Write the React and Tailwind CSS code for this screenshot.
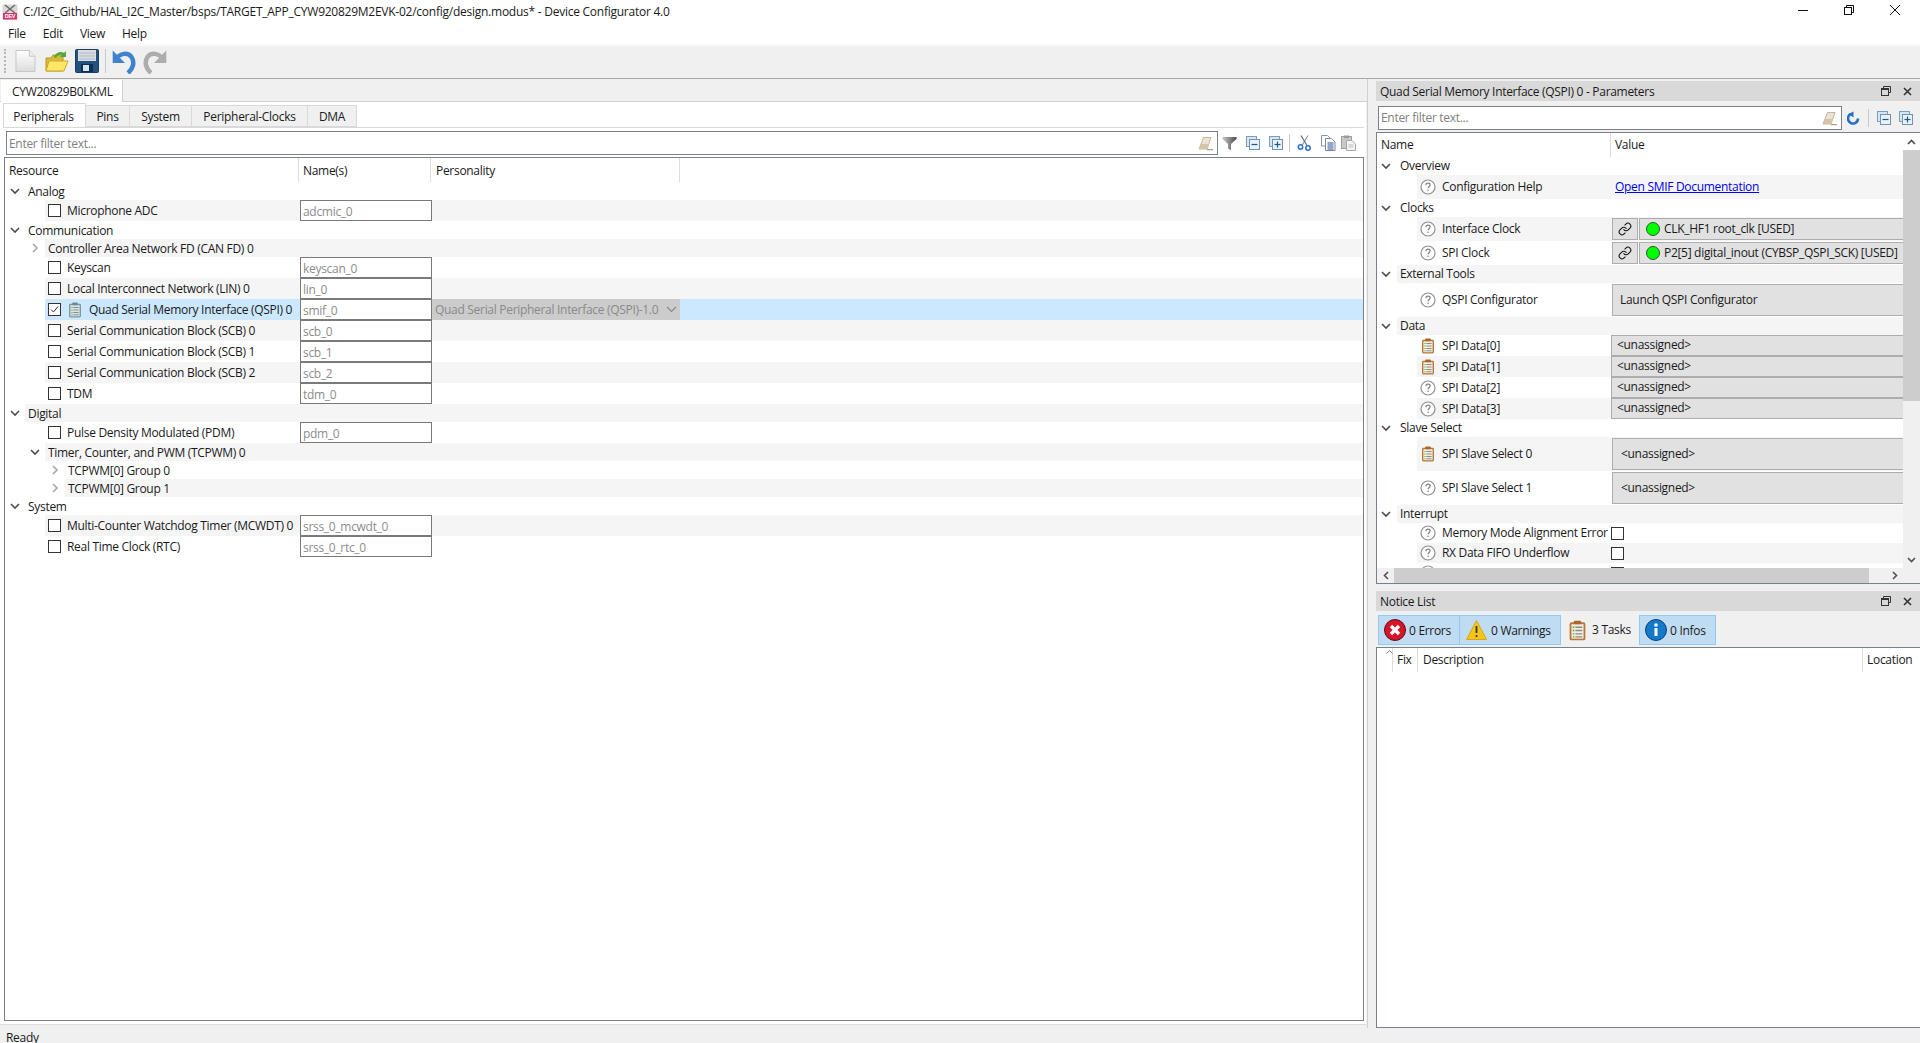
import React from 'react';
import { Link as LinkIcon } from 'lucide-react';

const Chevron = ({ open, className = '' }) => (
  <svg width="10" height="10" viewBox="0 0 10 10" className={className}>
    {open
      ? <path d="M1 3 L5 7 L9 3" fill="none" stroke="#4d4d4d" strokeWidth="1.6" />
      : <path d="M3 1 L7 5 L3 9" fill="none" stroke="#a6a6a6" strokeWidth="1.6" />}
  </svg>
);
const Check = ({ on, className = '' }) => (
  <div className={`w-[13px] h-[13px] border border-[#333333] bg-white shrink-0 flex items-center justify-center ${className}`}>
    {on && <svg width="9" height="9" viewBox="0 0 9 9"><path d="M1 4.5 L3.5 7 L8 1.5" fill="none" stroke="#333" strokeWidth="1" /></svg>}
  </div>
);
const Help = () => (
  <svg width="16" height="16" viewBox="0 0 16 16" className="shrink-0">
    <circle cx="8" cy="8" r="7" fill="#fff" stroke="#8f8f8f" strokeWidth="1.2" />
    <path d="M5.9 6.2 C5.9 4.9 6.9 4.2 8 4.2 C9.2 4.2 10.1 5 10.1 6 C10.1 7.4 8.1 7.5 8.1 9.2" fill="none" stroke="#808080" strokeWidth="1.2" />
    <circle cx="8.1" cy="11.3" r=".8" fill="#808080" />
  </svg>
);
const Task = ({ gray, size = 16 }) => (
  <svg width={size} height={size} viewBox="0 0 16 16" className="shrink-0">
    <rect x="2" y="1.8" width="12" height="13.6" rx="1.4" fill={gray ? '#7f97a3' : '#b9773f'} />
    <rect x="3.4" y="3.2" width="9.2" height="11" fill={gray ? '#d8e6e8' : '#f4eedf'} />
    <rect x="5.2" y=".6" width="5.6" height="2.6" rx=".8" fill={gray ? '#6f8894' : '#a8672f'} />
    <path d="M4.4 5.5h1.2M4.4 8h1.2M4.4 10.5h1.2M4.4 12.8h1.2" stroke="#5aa83a" strokeWidth="1" />
    <path d="M6.4 5.5h5.2M6.4 8h5.2M6.4 10.5h5.2M6.4 12.8h5.2" stroke="#8a8a8a" strokeWidth="1" />
  </svg>
);
const Eraser = () => (
  <svg width="16" height="16" viewBox="0 0 16 16" className="shrink-0">
    <path d="M1 14 L5.5 2.5 H13 L9 14 Z" fill="#ede3d4" stroke="#b8a68c" strokeWidth=".8" />
    <path d="M1 14 L3 9 H10.8 L9 14 Z" fill="#d6c3a8" />
    <path d="M9 14.7 H15" stroke="#9b8a70" strokeWidth="1" />
  </svg>
);
const Funnel = () => (
  <svg width="15" height="15" viewBox="0 0 15 15" className="shrink-0">
    <defs><linearGradient id="fg" x1="0" x2="1"><stop offset="0" stopColor="#c9c9c9" /><stop offset="1" stopColor="#4a4a4a" /></linearGradient></defs>
    <path d="M.5 1 H14.5 V3 L9 8 V14.5 L6 12.5 V8 L.5 3 Z" fill="url(#fg)" />
  </svg>
);
const Box = ({ plus }) => (
  <svg width="14" height="14" viewBox="0 0 14 14" className="shrink-0">
    <rect x=".5" y=".5" width="10" height="10" fill="#d8e6f2" stroke="#7f9db9" />
    <rect x="3.5" y="3.5" width="10" height="10" fill="#eaf2f9" stroke="#6f93b5" />
    <path d="M5.5 8.5 H11.5" stroke="#1c5a8c" strokeWidth="1.2" />
    {plus && <path d="M8.5 5.5 V11.5" stroke="#1c5a8c" strokeWidth="1.2" />}
  </svg>
);
const Scissors = () => (
  <svg width="14" height="16" viewBox="0 0 14 16" className="shrink-0">
    <path d="M11 .5 L5 10.5" stroke="#8b9bb0" strokeWidth="1.2" fill="none" />
    <path d="M4 .5 L10 10.5" stroke="#5d6f88" strokeWidth="1.2" fill="none" />
    <circle cx="3.5" cy="12" r="2.2" fill="none" stroke="#2f6fd0" strokeWidth="1.5" />
    <circle cx="11" cy="13" r="2.2" fill="none" stroke="#2f6fd0" strokeWidth="1.5" />
  </svg>
);
const CopyI = () => (
  <svg width="15" height="16" viewBox="0 0 15 16" className="shrink-0">
    <path d="M.5 .5 H6.5 L9 3 V11 H.5 Z" fill="#fff" stroke="#8a96a3" />
    <path d="M4.5 3.5 H10.5 L14 7 V15.5 H4.5 Z" fill="#fff" stroke="#7a8794" />
    <path d="M6.5 8h6M6.5 10h6M6.5 12h6M6.5 14h6" stroke="#1f4fa3" strokeWidth="1" />
  </svg>
);
const PasteI = () => (
  <svg width="15" height="16" viewBox="0 0 15 16" className="shrink-0">
    <rect x=".5" y="1.5" width="10" height="12" fill="#c9c9c9" stroke="#a0a0a0" />
    <rect x="3" y=".5" width="5" height="2.6" fill="#9a9a9a" />
    <path d="M5.5 5.5 H11 L14.5 9 V15.5 H5.5 Z" fill="#f5f5f5" stroke="#a8a8a8" />
    <path d="M7.5 10h5M7.5 12h5" stroke="#bdbdbd" strokeWidth="1" />
  </svg>
);
const RestoreI = () => (
  <svg width="10" height="10" viewBox="0 0 10 10" className="shrink-0">
    <path d="M2.5 2.5 V.5 H9.5 V6.5 H7.5" fill="none" stroke="#333" />
    <rect x=".5" y="2.5" width="7" height="7" fill="none" stroke="#333" />
    <path d="M.5 3.5 H7.5" stroke="#333" />
  </svg>
);
const CloseI = () => (
  <svg width="9" height="9" viewBox="0 0 9 9" className="shrink-0">
    <path d="M1 1 L8 8 M8 1 L1 8" stroke="#333" strokeWidth="1.6" />
  </svg>
);
const Refresh = () => (
  <svg width="13" height="14" viewBox="0 0 13 14" className="shrink-0">
    <path d="M3.4 3.2 A5 5 0 1 0 11 7.5" fill="none" stroke="#2272c3" strokeWidth="2.6" />
    <path d="M6.5 .4 V6.4 L1.4 3 Z" fill="#2272c3" />
  </svg>
);

const Field = ({ children }) => (
  <div className="w-[132px] h-[21px] border-[1.5px] border-[#7a7a7a] bg-white text-[#8c8c8c] pl-[2px] leading-[21px] shrink-0 overflow-hidden">{children}</div>
);

const tree = [
  { t: 'Analog', lvl: 0, open: true },
  { t: 'Microphone ADC', lvl: 1, chk: true, name: 'adcmic_0', alt: true },
  { t: 'Communication', lvl: 0, open: true },
  { t: 'Controller Area Network FD (CAN FD) 0', lvl: 1, open: false, alt: true },
  { t: 'Keyscan', lvl: 1, chk: true, name: 'keyscan_0' },
  { t: 'Local Interconnect Network (LIN) 0', lvl: 1, chk: true, name: 'lin_0', alt: true },
  { t: 'Quad Serial Memory Interface (QSPI) 0', lvl: 1, chk: true, on: true, name: 'smif_0', sel: true },
  { t: 'Serial Communication Block (SCB) 0', lvl: 1, chk: true, name: 'scb_0', alt: true },
  { t: 'Serial Communication Block (SCB) 1', lvl: 1, chk: true, name: 'scb_1' },
  { t: 'Serial Communication Block (SCB) 2', lvl: 1, chk: true, name: 'scb_2', alt: true },
  { t: 'TDM', lvl: 1, chk: true, name: 'tdm_0' },
  { t: 'Digital', lvl: 0, open: true, alt: true },
  { t: 'Pulse Density Modulated (PDM)', lvl: 1, chk: true, name: 'pdm_0' },
  { t: 'Timer, Counter, and PWM (TCPWM) 0', lvl: 1, open: true, alt: true },
  { t: 'TCPWM[0] Group 0', lvl: 2, open: false },
  { t: 'TCPWM[0] Group 1', lvl: 2, open: false, alt: true },
  { t: 'System', lvl: 0, open: true },
  { t: 'Multi-Counter Watchdog Timer (MCWDT) 0', lvl: 1, chk: true, name: 'srss_0_mcwdt_0', alt: true },
  { t: 'Real Time Clock (RTC)', lvl: 1, chk: true, name: 'srss_0_rtc_0' },
];

const TreeRow = ({ r }) => {
  const bg = r.sel ? 'bg-[#cce8ff]' : r.alt ? 'bg-[#f5f5f5]' : 'bg-white';
  const indent = r.lvl === 0 ? 'pl-[5px]' : r.lvl === 1 ? (r.chk ? 'pl-[43px]' : 'pl-[25px]') : 'pl-[45px]';
  const bandStart = r.lvl === 0 ? 'ml-[20px]' : r.lvl === 1 ? 'ml-[40px]' : 'ml-[60px]';
  return (
    <div className={`relative flex items-center ${r.name ? 'h-[21px]' : 'h-[18px]'} w-full`}>
      <div className={`absolute inset-y-0 right-0 left-0 ${bandStart} ${bg}`} />
      <div className={`relative flex items-center w-[295px] shrink-0 ${indent}`}>
        {r.open !== undefined && <Chevron open={r.open} className="shrink-0 mr-[8px]" />}
        {r.chk && <Check on={r.on} className="mr-[6px]" />}
        {r.sel && <span className="mr-[6px]"><Task gray /></span>}
        <span className={`whitespace-nowrap ${r.name ? '' : 'pt-[2px]'}`}>{r.t}</span>
      </div>
      {r.name && <div className="relative"><Field>{r.name}</Field></div>}
      {r.sel && (
        <div className="relative w-[248px] h-[21px] bg-[#cccccc] text-[#8a8a8a] flex items-center justify-between pl-[3px] pr-[3px]">
          <span className="whitespace-nowrap">Quad Serial Peripheral Interface (QSPI)-1.0</span>
          <svg width="11" height="7" viewBox="0 0 11 7"><path d="M1 1 L5.5 5.5 L10 1" fill="none" stroke="#8a8a8a" strokeWidth="1.2" /></svg>
        </div>
      )}
    </div>
  );
};

const Group = ({ t, alt }) => (
  <div className="relative flex items-center h-[18px] pl-[4px]">
    <div className={`absolute inset-y-0 left-[20px] right-0 ${alt ? 'bg-[#f5f5f5]' : 'bg-white'}`} />
    <Chevron open className="relative shrink-0 mr-[9px]" />
    <span className="relative">{t}</span>
  </div>
);
const PRow = ({ icon, t, h, alt, children }) => (
  <div className={`relative flex items-center ${h}`}>
    <div className={`absolute inset-y-0 left-[40px] right-0 ${alt ? 'bg-[#f5f5f5]' : 'bg-white'}`} />
    <div className="relative flex items-center w-[235px] shrink-0 pl-[43px] gap-[6px]">
      {icon === 'task' ? <Task /> : <Help />}
      <span className="whitespace-nowrap">{t}</span>
    </div>
    <div className="relative flex-1 min-w-0 h-full">{children}</div>
  </div>
);
const Gray = ({ children, cls }) => (
  <div className={`bg-[#e1e1e1] border-[#adadad] flex items-center whitespace-nowrap overflow-hidden ${cls}`}>{children}</div>
);
const Assign = () => (
  <Gray cls="h-full border-l-[1.5px] border-t-[1.5px] border-b-[1.5px] -ml-[1px] pl-[5px] pb-[2px]">&lt;unassigned&gt;</Gray>
);
const Led = () => <div className="w-[14px] h-[14px] rounded-full bg-[#00ff00] border border-[#2a5a2a] shrink-0" />;

const Clock = ({ text }) => (
  <div className="flex h-full py-[1px] gap-[1px]">
    <div className="w-[26px] bg-[#e1e1e1] border border-[#adadad] flex items-center justify-center shrink-0">
      <LinkIcon size={14} strokeWidth={1.8} color="#111111" />
    </div>
    <Gray cls="flex-1 min-w-0 border border-r-0 pl-[6px] gap-[4px]"><Led /><span>{text}</span></Gray>
  </div>
);

const Panel = ({ title }) => (
  <div className="h-[20px] bg-[#d9d9d9] flex items-center pl-[4px] pr-[8px] shrink-0">
    <span className="flex-1 pt-[1px]">{title}</span>
    <RestoreI />
    <span className="w-[12px]" />
    <CloseI />
  </div>
);

const Sep = ({ h = 'h-[18px]' }) => <div className={`w-px ${h} bg-[#c9c9c9] shrink-0`} />;

export default function App() {
  return (
    <div className="w-[1920px] h-[1043px] overflow-hidden flex flex-col bg-[#f0f0f0] text-[12px] text-[#1a1a1a] font-['Open_Sans','Noto_Sans',sans-serif] tracking-[-0.3px]">
      {/* title bar */}
      <div className="h-[23px] bg-white flex items-center shrink-0 relative">
        <svg width="16" height="16" viewBox="0 0 16 16" className="ml-[2px] mr-[5px] shrink-0">
          <rect x=".5" y=".5" width="15" height="15" fill="#d9d9d9" />
          <path d="M3 1 L13 9 M13 1 L3 9" stroke="#6b6b6b" strokeWidth="1.6" />
          <rect x="1" y="9" width="14" height="6.5" fill="#d6336c" />
          <text x="8" y="14.4" textAnchor="middle" fontSize="5.5" fill="#fff" fontFamily="Liberation Sans, sans-serif" fontWeight="700">DEV</text>
        </svg>
        <span className="whitespace-nowrap tracking-[-0.25px]">C:/I2C_Github/HAL_I2C_Master/bsps/TARGET_APP_CYW920829M2EVK-02/config/design.modus* - Device Configurator 4.0</span>
        <div className="ml-auto flex items-center h-full pb-[4px]">
          <svg width="10" height="10" viewBox="0 0 10 10" className="mr-[36px]"><path d="M0 5.5 H10" stroke="#111" /></svg>
          <svg width="10" height="10" viewBox="0 0 10 10" className="mr-[36px]"><path d="M2.5 2.5 V.5 H9.5 V7.5 H7.5" fill="none" stroke="#111" /><rect x=".5" y="2.5" width="7" height="7" fill="none" stroke="#111" /></svg>
          <svg width="10" height="10" viewBox="0 0 10 10" className="mr-[20px]"><path d="M0 0 L10 10 M10 0 L0 10" stroke="#111" /></svg>
        </div>
      </div>
      {/* menu */}
      <div className="h-[21px] bg-white flex items-center pl-[8px] gap-[17px] shrink-0">
        <span>File</span><span>Edit</span><span>View</span><span>Help</span>
      </div>
      <div className="h-[2px] bg-[#f8f8f8] shrink-0" />
      {/* toolbar */}
      <div className="h-[33px] bg-[#f0f0f0] border-b border-[#a8a8a8] flex items-center shrink-0 pl-[4px] pb-[2px]">
        <div className="w-[3px] h-[24px] mr-[8px] border-l-2 border-dotted border-[#b5b5b5]" />
        <svg width="21" height="24" viewBox="0 0 22 24" className="mr-[9px]">
          <defs><linearGradient id="nd" x1="0" y1="0" x2="0" y2="1"><stop offset="0" stopColor="#ffffff" /><stop offset="1" stopColor="#dcdcdc" /></linearGradient></defs>
          <path d="M1 1 H15 L21 7 V23 H1 Z" fill="url(#nd)" stroke="#c4c4c4" />
          <path d="M15 1 V7 H21" fill="#eeeeee" stroke="#c4c4c4" />
        </svg>
        <svg width="24" height="22" viewBox="0 0 24 22" className="mr-[6px]">
          <path d="M1 8 H6 L8 5 H18 V21 H1 Z" fill="#d9b93a" stroke="#b89a25" />
          <path d="M4 11 H23 L19 21 H1 Z" fill="#ffe667" stroke="#c9aa2c" />
          <path d="M9 7 C11 2 16 1 19 3 L21 1 V7 H15 L17 5 C15 4 12 5 11 8 Z" fill="#4fa83a" />
        </svg>
        <svg width="24" height="24" viewBox="0 0 24 24" className="mr-[6px]">
          <rect x=".5" y=".5" width="23" height="23" rx="1" fill="#24527f" stroke="#1a3d60" />
          <rect x="3" y="1" width="18" height="11" fill="#dcdcdc" />
          <path d="M4 4 H20 M4 7 H20 M4 10 H20" stroke="#a8bcd0" strokeWidth="1" />
          <rect x="6" y="15" width="12" height="8" fill="#0f2f52" />
          <rect x="8" y="16" width="6" height="6" fill="#d9e6f2" />
        </svg>
        <Sep h="h-[24px]" />
        <svg width="24" height="25" viewBox="0 0 24 25" className="ml-[6px] mr-[7px]">
          <path d="M4 10 C8 4 16 3 19.5 8 C23 13 21 20 16 24" fill="none" stroke="#3f83cf" strokeWidth="4.5" />
          <path d="M.7 1.5 V14 H13 Z" fill="#3f83cf" />
        </svg>
        <svg width="24" height="25" viewBox="0 0 24 25">
          <path d="M20 10 C16 4 8 3 4.5 8 C1 13 3 20 8 24" fill="none" stroke="#adadad" strokeWidth="4.5" />
          <path d="M23.3 1.5 V14 H11 Z" fill="#adadad" />
        </svg>
      </div>
      {/* main */}
      <div className="flex-1 min-h-0 flex">
        {/* left */}
        <div className="w-[1368px] shrink-0 flex flex-col border-r border-[#d0d0d0]">
          <div className="h-[23px] flex items-start shrink-0 border-b border-[#cfcfcf] pt-[1px] pl-[1px]">
            <div className="w-[122px] h-[23px] bg-white border-r border-[#cfcfcf] flex items-center pl-[11px]">CYW20829B0LKML</div>
          </div>
          <div className="flex-1 min-h-0 bg-white flex flex-col pl-[3px] pr-[2px] mr-[1px] mb-[3px] border-b border-[#dcdcdc]">
            <div className="h-[26px] flex items-end shrink-0 border-b border-[#d9d9d9]">
              <div className="w-[83px] h-[24px] bg-white border border-b-0 border-[#d9d9d9] flex items-center justify-center pr-[2px] pt-[2px]">Peripherals</div>
              <div className="w-[44px] h-[22px] bg-[#f0f0f0] border border-l-0 border-[#d9d9d9] flex items-center justify-center pt-[2px]">Pins</div>
              <div className="w-[62px] h-[22px] bg-[#f0f0f0] border border-l-0 border-[#d9d9d9] flex items-center justify-center pt-[2px]">System</div>
              <div className="w-[116px] h-[22px] bg-[#f0f0f0] border border-l-0 border-[#d9d9d9] flex items-center justify-center pt-[2px]">Peripheral-Clocks</div>
              <div className="w-[49px] h-[22px] bg-[#f0f0f0] border border-l-0 border-[#d9d9d9] flex items-center justify-center pt-[2px]">DMA</div>
            </div>
            <div className="h-[24px] mt-[3px] flex items-center shrink-0">
              <div className="w-[1212px] ml-[3px] h-full border border-[#7a8088] bg-white flex items-center pl-[2px] pr-[3px] text-[#808080]">
                <span className="flex-1 pt-[1px]">Enter filter text...</span><Eraser />
              </div>
              <div className="flex items-center ml-[4px]">
                <Funnel />
                <span className="w-[9px]" /><Box />
                <span className="w-[9px]" /><Box plus />
                <span className="w-[6px]" /><Sep />
                <span className="w-[7px]" /><Scissors />
                <span className="w-[10px]" /><CopyI />
                <span className="w-[5px]" /><PasteI />
              </div>
            </div>
            <div className="flex-1 min-h-0 mt-[2px] mb-[3px] ml-[1px] border border-[#7a8088] bg-white overflow-hidden">
              <div className="h-[24px] flex items-center">
                <div className="w-[294px] pl-[4px] pt-[2px] h-full flex items-center border-r border-[#dcdcdc]">Resource</div>
                <div className="w-[132px] pl-[4px] pt-[2px] h-full flex items-center border-r border-[#dcdcdc]">Name(s)</div>
                <div className="w-[249px] pl-[5px] pt-[2px] h-full flex items-center border-r border-[#dcdcdc]">Personality</div>
              </div>
              {tree.map((r) => <TreeRow key={r.t} r={r} />)}
            </div>
          </div>
        </div>
        {/* right */}
        <div className="flex-1 min-w-0 flex flex-col pl-[8px]">
          <div className="h-[2px] shrink-0" />
          <Panel title="Quad Serial Memory Interface (QSPI) 0 - Parameters" />
          <div className="h-[24px] mt-[5px] flex items-center shrink-0 pl-[2px]">
            <div className="w-[464px] h-full border border-[#7a8088] bg-white flex items-center pl-[2px] pr-[3px] text-[#808080]">
              <span className="flex-1">Enter filter text...</span><Eraser />
            </div>
            <div className="flex items-center gap-[8px] ml-[5px]"><Refresh /><Sep /><Box /><Box plus /></div>
          </div>
          <div className="h-[452px] mt-[2px] border border-r-0 border-[#7a8088] bg-white flex flex-col shrink-0 overflow-hidden">
            <div className="flex-1 min-h-0 flex">
              <div className="flex-1 min-w-0 overflow-hidden">
                <div className="h-[24px] flex items-center">
                  <div className="w-[234px] pl-[4px] h-full flex items-center border-r border-[#dcdcdc]">Name</div>
                  <div className="pl-[4px]">Value</div>
                </div>
                <Group t="Overview" />
                <PRow t="Configuration Help" h="h-[24px]" alt>
                  <div className="h-full flex items-center pl-[3px] text-[#0000ee] underline">Open SMIF Documentation</div>
                </PRow>
                <Group t="Clocks" />
                <PRow t="Interface Clock" h="h-[24px]" alt><Clock text="CLK_HF1 root_clk [USED]" /></PRow>
                <PRow t="SPI Clock" h="h-[24px]"><Clock text="P2[5] digital_inout (CYBSP_QSPI_SCK) [USED]" /></PRow>
                <Group t="External Tools" alt />
                <PRow t="QSPI Configurator" h="h-[34px]">
                  <div className="h-full py-[1px]"><Gray cls="h-full border border-r-0 pl-[7px]">Launch QSPI Configurator</Gray></div>
                </PRow>
                <Group t="Data" alt />
                <PRow icon="task" t="SPI Data[0]" h="h-[21px]"><Assign /></PRow>
                <PRow icon="task" t="SPI Data[1]" h="h-[21px]" alt><Assign /></PRow>
                <PRow t="SPI Data[2]" h="h-[21px]"><Assign /></PRow>
                <PRow t="SPI Data[3]" h="h-[21px]" alt><Assign /></PRow>
                <Group t="Slave Select" />
                <PRow icon="task" t="SPI Slave Select 0" h="h-[34px]" alt>
                  <div className="h-full py-[1px]"><Gray cls="h-full border border-r-0 pl-[8px]">&lt;unassigned&gt;</Gray></div>
                </PRow>
                <PRow t="SPI Slave Select 1" h="h-[34px]">
                  <div className="h-full py-[1px]"><Gray cls="h-full border border-r-0 pl-[8px]">&lt;unassigned&gt;</Gray></div>
                </PRow>
                <Group t="Interrupt" alt />
                <PRow t="Memory Mode Alignment Error" h="h-[20px]"><div className="h-full flex items-center -ml-[1px]"><Check /></div></PRow>
                <PRow t="RX Data FIFO Underflow" h="h-[20px]" alt><div className="h-full flex items-center -ml-[1px]"><Check /></div></PRow>
                <PRow t="" h="h-[20px]"><div className="h-full flex items-center -ml-[1px]"><Check /></div></PRow>
              </div>
              {/* v scrollbar */}
              <div className="w-[17px] shrink-0 bg-[#f0f0f0] flex flex-col items-center">
                <div className="h-[17px] bg-white w-full flex items-center justify-center">
                  <svg width="9" height="6" viewBox="0 0 9 6"><path d="M1 5 L4.5 1.5 L8 5" fill="none" stroke="#505050" strokeWidth="1.6" /></svg>
                </div>
                <div className="h-[251px] w-full bg-[#cdcdcd]" />
                <div className="flex-1" />
                <div className="h-[17px] w-full flex items-center justify-center">
                  <svg width="9" height="6" viewBox="0 0 9 6"><path d="M1 1 L4.5 4.5 L8 1" fill="none" stroke="#505050" strokeWidth="1.6" /></svg>
                </div>
              </div>
            </div>
            {/* h scrollbar */}
            <div className="h-[15px] bg-[#f0f0f0] flex items-center shrink-0 pr-[17px]">
              <div className="w-[17px] flex justify-center"><svg width="6" height="9" viewBox="0 0 6 9"><path d="M5 1 L1.5 4.5 L5 8" fill="none" stroke="#505050" strokeWidth="1.6" /></svg></div>
              <div className="w-[475px] h-full bg-[#cdcdcd]" />
              <div className="flex-1 flex justify-end pr-[5px]"><svg width="6" height="9" viewBox="0 0 6 9"><path d="M1 1 L4.5 4.5 L1 8" fill="none" stroke="#505050" strokeWidth="1.6" /></svg></div>
            </div>
          </div>
          <div className="h-[7px] shrink-0" />
          <Panel title="Notice List" />
          <div className="h-[30px] mt-[4px] flex shrink-0 pl-[2px]">
            <div className="w-[82px] h-full bg-[#c0dcf3] border border-[#90c8f6] flex items-center pl-[5px] gap-[3px]">
              <svg width="22" height="22" viewBox="0 0 22 22" className="shrink-0"><circle cx="11" cy="11" r="10.5" fill="#d4162c" stroke="#5e0c14" /><path d="M7 7 L15 15 M15 7 L7 15" stroke="#fff" strokeWidth="3.4" /></svg>
              <span className="pt-[2px]">0 Errors</span>
            </div>
            <div className="w-[101px] h-full bg-[#c0dcf3] border border-l-0 border-[#90c8f6] flex items-center pl-[6px] gap-[4px]">
              <svg width="21" height="20" viewBox="0 0 21 20" className="shrink-0"><path d="M10.5 .5 L20.5 19.5 H.5 Z" fill="#f6c51a" stroke="#d9a70e" /><path d="M10.5 6 V13" stroke="#333" strokeWidth="1.8" /><circle cx="10.5" cy="16" r="1.1" fill="#333" /></svg>
              <span className="pt-[2px]">0 Warnings</span>
            </div>
            <div className="w-[78px] h-full flex items-center pl-[6px] gap-[4px]">
              <Task size={21} /><span>3 Tasks</span>
            </div>
            <div className="w-[77px] h-full bg-[#c0dcf3] border border-[#90c8f6] flex items-center pl-[5px] gap-[3px]">
              <svg width="22" height="22" viewBox="0 0 22 22" className="shrink-0"><circle cx="11" cy="11" r="10.5" fill="#1479c9" stroke="#0b3f70" /><circle cx="11" cy="6" r="1.8" fill="#fff" /><path d="M11 9 V17" stroke="#fff" strokeWidth="3" /></svg>
              <span className="pt-[2px]">0 Infos</span>
            </div>
          </div>
          <div className="flex-1 min-h-0 mt-[2px] border border-r-0 border-[#7a8088] bg-white">
            <div className="h-[24px] flex items-center">
              <div className="w-[16px] h-full border-r border-[#dcdcdc] relative">
                <svg width="7" height="4" viewBox="0 0 7 4" className="absolute left-[9px] top-[2px]"><path d="M.5 3.5 L3.5 .5 L6.5 3.5" fill="none" stroke="#888" /></svg>
              </div>
              <div className="w-[25px] h-full flex items-center pl-[4px] border-r border-[#dcdcdc]">Fix</div>
              <div className="w-[445px] h-full flex items-center pl-[5px] border-r border-[#dcdcdc]">Description</div>
              <div className="pl-[4px]">Location</div>
            </div>
          </div>
        </div>
      </div>
      {/* status */}
      <div className="h-[15px] bg-[#f0f0f0] pl-[6px] shrink-0 leading-[20px] overflow-hidden">Ready</div>
    </div>
  );
}
